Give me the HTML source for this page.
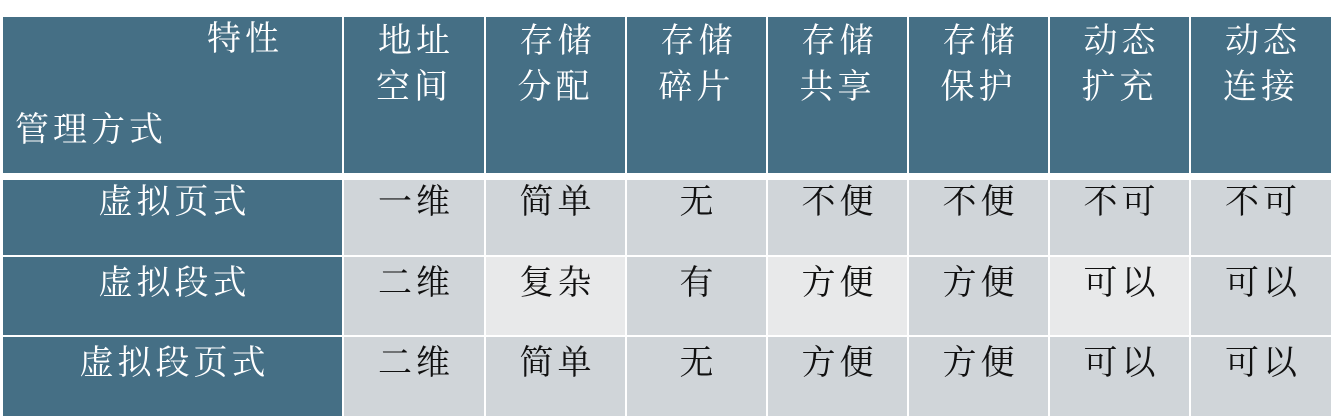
<!DOCTYPE html>
<html><head><meta charset="utf-8"><style>
body{margin:0;width:1335px;height:420px;background:#fff;position:relative;overflow:hidden;font-family:"Liberation Serif","Noto Serif CJK SC",serif;}
.c{position:absolute;text-align:center;font-size:34px;line-height:46px;box-sizing:border-box;letter-spacing:4px;text-indent:4px;}
.h{background:#456f85;color:#fff;}
.d{background:#d0d5d9;color:#111;}
.l{background:#e8e9ea;color:#111;}
</style></head><body>
<div class="c h" style="left:3px;top:17px;width:339px;height:156px;"></div>
<div class="c" style="left:3px;top:17px;width:339px;color:#fff;text-align:left;padding-left:204px;text-indent:0">特性</div>
<div class="c" style="left:3px;top:108px;width:339px;color:#fff;text-align:left;padding-left:12px;text-indent:0">管理方式</div>

<div class="c h" style="left:344px;top:17px;width:140px;height:156px;padding-top:2px">地址<br>空间</div>
<div class="c h" style="left:486px;top:17px;width:139px;height:156px;padding-top:2px">存储<br>分配</div>
<div class="c h" style="left:627px;top:17px;width:139px;height:156px;padding-top:2px">存储<br>碎片</div>
<div class="c h" style="left:768px;top:17px;width:139px;height:156px;padding-top:2px">存储<br>共享</div>
<div class="c h" style="left:909px;top:17px;width:139px;height:156px;padding-top:2px">存储<br>保护</div>
<div class="c h" style="left:1050px;top:17px;width:139px;height:156px;padding-top:2px">动态<br>扩充</div>
<div class="c h" style="left:1191px;top:17px;width:140px;height:156px;padding-top:2px">动态<br>连接</div>

<div class="c h" style="left:3px;top:180px;width:339px;height:75px;padding-top:0">虚拟页式</div>
<div class="c d" style="left:344px;top:180px;width:140px;height:75px">一维</div>
<div class="c d" style="left:486px;top:180px;width:139px;height:75px">简单</div>
<div class="c d" style="left:627px;top:180px;width:139px;height:75px">无</div>
<div class="c d" style="left:768px;top:180px;width:139px;height:75px">不便</div>
<div class="c d" style="left:909px;top:180px;width:139px;height:75px">不便</div>
<div class="c d" style="left:1050px;top:180px;width:139px;height:75px">不可</div>
<div class="c d" style="left:1191px;top:180px;width:140px;height:75px">不可</div>

<div class="c h" style="left:3px;top:257px;width:339px;height:78px;padding-top:4px">虚拟段式</div>
<div class="c d" style="left:344px;top:257px;width:140px;height:78px;padding-top:4px">二维</div>
<div class="c l" style="left:486px;top:257px;width:139px;height:78px;padding-top:4px">复杂</div>
<div class="c d" style="left:627px;top:257px;width:139px;height:78px;padding-top:4px">有</div>
<div class="c l" style="left:768px;top:257px;width:139px;height:78px;padding-top:4px">方便</div>
<div class="c d" style="left:909px;top:257px;width:139px;height:78px;padding-top:4px">方便</div>
<div class="c l" style="left:1050px;top:257px;width:139px;height:78px;padding-top:4px">可以</div>
<div class="c d" style="left:1191px;top:257px;width:140px;height:78px;padding-top:4px">可以</div>

<div class="c h" style="left:3px;top:337px;width:339px;height:79px;padding-top:4px">虚拟段页式</div>
<div class="c d" style="left:344px;top:337px;width:140px;height:79px;padding-top:4px">二维</div>
<div class="c d" style="left:486px;top:337px;width:139px;height:79px;padding-top:4px">简单</div>
<div class="c d" style="left:627px;top:337px;width:139px;height:79px;padding-top:4px">无</div>
<div class="c d" style="left:768px;top:337px;width:139px;height:79px;padding-top:4px">方便</div>
<div class="c d" style="left:909px;top:337px;width:139px;height:79px;padding-top:4px">方便</div>
<div class="c d" style="left:1050px;top:337px;width:139px;height:79px;padding-top:4px">可以</div>
<div class="c d" style="left:1191px;top:337px;width:140px;height:79px;padding-top:4px">可以</div>
</body></html>
